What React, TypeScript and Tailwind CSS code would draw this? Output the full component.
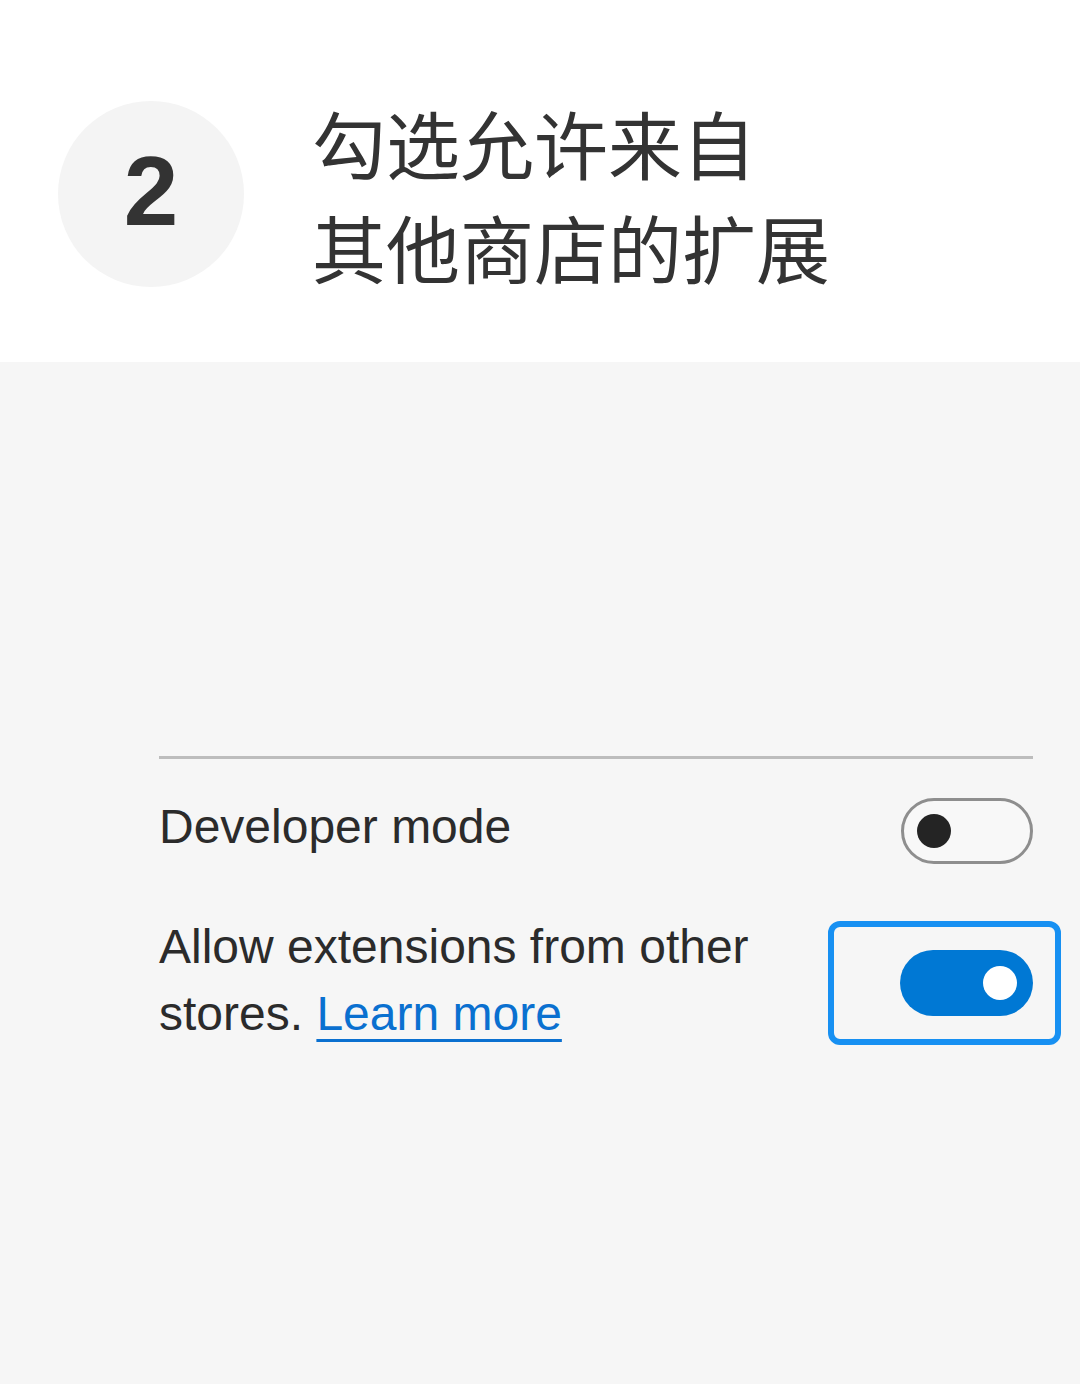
import React from "react";

export default function App() {
  return (
    <div className="w-[1080px] h-[1384px] flex flex-col bg-white">
      <header className="h-[362px] bg-white flex items-center pl-[58px] pt-[26px]">
        <div className="w-[186px] h-[186px] rounded-full bg-[#f4f4f4] flex items-center justify-center">
          <span className="text-[98px] font-bold leading-none text-[#333333] font-['Liberation_Sans',sans-serif] mb-[6px]">2</span>
        </div>
        <h1 className="ml-[68px] text-[74px] leading-[104px] text-[#333333] font-['Noto_Sans_CJK_SC',sans-serif] font-normal">
          <div>勾选允许来自</div>
          <div>其他商店的扩展</div>
        </h1>
      </header>
      <main className="flex-1 bg-[#f6f6f6] pt-[394px] pl-[159px] pr-[47px] font-['Liberation_Sans',sans-serif] text-[#2b2b2b]">
        <div className="h-[3px] bg-[#bdbdbd]" />
        <div className="mt-[39px] flex items-center justify-between h-[66px]">
          <span className="text-[48px] leading-none pb-[8px]">Developer mode</span>
          <div className="w-[132px] h-[66px] rounded-full border-[3px] border-[#8e8e8e] bg-[#f8f8f8] flex items-center pl-[13px]">
            <div className="w-[34px] h-[34px] rounded-full bg-[#242424]" />
          </div>
        </div>
        <div className="mt-[49px] flex items-center justify-between">
          <p className="text-[48px] leading-[67px] pb-[6px]">
            Allow extensions from other
            <br />
            stores.{" "}
            <a className="text-[#0a70d0] underline decoration-[3px] underline-offset-[9px]" href="#">
              Learn more
            </a>
          </p>
          <div className="mr-[-28px] w-[233px] h-[124px] rounded-[12px] border-[6px] border-[#1790f2] flex items-center justify-end pr-[22px]">
            <div className="w-[133px] h-[66px] rounded-full bg-[#0078d4] flex items-center justify-end pr-[16px]">
              <div className="w-[34px] h-[34px] rounded-full bg-white" />
            </div>
          </div>
        </div>
      </main>
    </div>
  );
}
